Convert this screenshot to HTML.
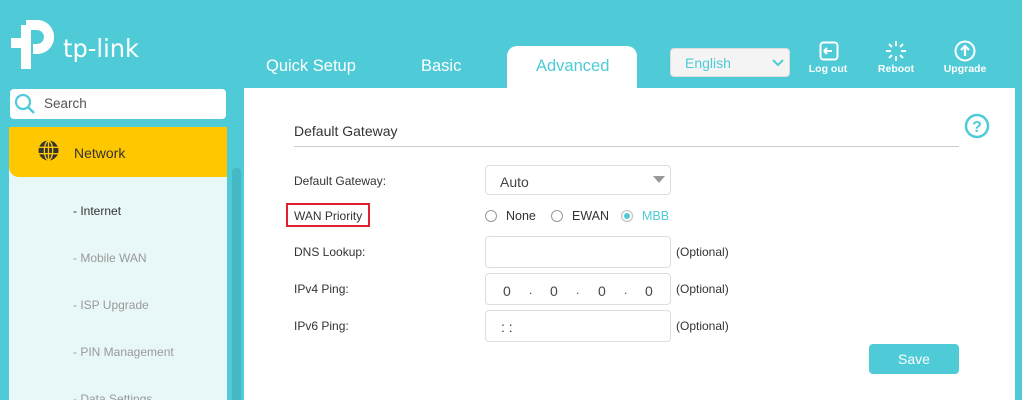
<!DOCTYPE html>
<html><head><style>
*{margin:0;padding:0;box-sizing:border-box}
html,body{width:1022px;height:400px;overflow:hidden}
body{background:#4ecbd6;font-family:"Liberation Sans",Arial,sans-serif;position:relative}
.a{position:absolute}
.tab{position:absolute;top:57px;color:#fff;font-size:17px}
.lbl{position:absolute;left:294px;font-size:12px;color:#333}
.inp{position:absolute;left:485px;width:186px;height:32px;border:1px solid #ddd;border-radius:4px;background:#fff;font-size:14px;color:#444}
.opt{position:absolute;left:676px;font-size:12px;color:#333}
.rad{position:absolute;width:12px;height:12px;border:1px solid #999;border-radius:50%}
.sub{position:absolute;left:73px;font-size:12px;color:#999}
.ic{position:absolute;top:63px;color:#fff;font-size:10.5px;font-weight:bold;text-align:center;width:60px}
</style></head><body>
<!-- logo -->
<svg class="a" style="left:8px;top:19px" width="135" height="52" viewBox="0 0 135 52">
<path d="M19 24 H3 M18 6 H29 a12 12 0 0 1 0 24 H25 M18 6 V50" stroke="#fff" stroke-width="10" fill="none"/>
<path d="M23 6 H29 a12 12 0 0 1 0 24" stroke="#fff" stroke-width="10" fill="none"/>
<text x="55" y="38" font-family="DejaVu Sans" font-size="25" fill="#fff" textLength="76" lengthAdjust="spacingAndGlyphs">tp-link</text>
</svg>
<!-- search -->
<div class="a" style="left:10px;top:89px;width:216px;height:30px;background:#fff;border-radius:4px"></div>
<svg class="a" style="left:14px;top:93px" width="22" height="22"><circle cx="9" cy="9" r="7" stroke="#4ecbd6" stroke-width="2.2" fill="none"/><path d="M14 14 L20 20" stroke="#4ecbd6" stroke-width="2.5"/></svg>
<div class="a" style="left:44px;top:96px;font-size:13.5px;color:#555">Search</div>
<!-- sidebar -->
<div class="a" style="left:9px;top:127px;width:218px;height:290px;background:#e8f8f8"></div>
<div class="a" style="left:9px;top:127px;width:218px;height:50px;background:#ffc700;border-radius:0 0 0 10px"></div>
<svg class="a" style="left:38px;top:140px" width="21" height="21" viewBox="0 0 20 20"><circle cx="10" cy="10" r="9.5" fill="#333"/><g stroke="#ffc700" stroke-width="1.3" fill="none"><ellipse cx="10" cy="10" rx="4" ry="9"/><path d="M1 7h18M1 13h18M10 1v18"/></g></svg>
<div class="a" style="left:74px;top:145px;font-size:14px;color:#333">Network</div>
<div class="sub" style="top:204px;color:#333">- Internet</div>
<div class="sub" style="top:251px">- Mobile WAN</div>
<div class="sub" style="top:298px">- ISP Upgrade</div>
<div class="sub" style="top:345px">- PIN Management</div>
<div class="sub" style="top:392px">- Data Settings</div>
<div class="a" style="left:232px;top:168px;width:9px;height:250px;background:#45b8c3;border-radius:4px"></div>
<!-- tabs -->
<div class="tab" style="left:266px;font-size:16.5px">Quick Setup</div>
<div class="tab" style="left:421px;font-size:16.5px">Basic</div>
<div class="a" style="left:507px;top:46px;width:130px;height:44px;background:#fff;border-radius:10px 10px 0 0"></div>
<div class="tab" style="left:536px;color:#4ecbd6;font-size:16.5px">Advanced</div>
<!-- lang -->
<div class="a" style="left:670px;top:48px;width:120px;height:29px;background:#f4f4f4;border:1px solid #ddd;border-radius:4px"></div>
<div class="a" style="left:685px;top:55px;font-size:14px;color:#4ecbd6">English</div>
<svg class="a" style="left:772px;top:59px" width="12" height="8"><path d="M1 1 L6 6 L11 1" stroke="#4ecbd6" stroke-width="2" fill="none"/></svg>
<!-- icons -->
<svg class="a" style="left:819px;top:41px" width="20" height="20"><rect x="1.5" y="1.5" width="17" height="17" rx="3" stroke="#fff" stroke-width="2" fill="none"/><path d="M5 10h8M5 10l3-3M5 10l3 3" stroke="#fff" stroke-width="2" fill="none"/></svg>
<div class="ic" style="left:798px">Log out</div>
<svg class="a" style="left:885px;top:40px" width="22" height="22" stroke="#fff" stroke-width="2"><path d="M11 1v5M11 16v5M1 11h5M16 11h5M4 4l3 3M15 15l3 3M18 4l-3 3M7 15l-3 3"/></svg>
<div class="ic" style="left:866px">Reboot</div>
<svg class="a" style="left:954px;top:40px" width="22" height="22"><circle cx="11" cy="11" r="9.5" stroke="#fff" stroke-width="2" fill="none"/><path d="M11 16V7M7 10l4-4 4 4" stroke="#fff" stroke-width="2.2" fill="none"/></svg>
<div class="ic" style="left:935px">Upgrade</div>
<!-- content -->
<div class="a" style="left:244px;top:88px;width:771px;height:330px;background:#fff"></div>
<div class="a" style="left:294px;top:123px;font-size:14px;color:#333">Default Gateway</div>
<div class="a" style="left:294px;top:146px;width:665px;height:1px;background:#ccc"></div>
<svg class="a" style="left:964px;top:113px" width="26" height="26"><circle cx="13" cy="13" r="11" stroke="#4ecbd6" stroke-width="2.5" fill="none"/><text x="13" y="19" text-anchor="middle" font-family="Liberation Sans" font-weight="bold" font-size="16" fill="#4ecbd6">?</text></svg>
<div class="lbl" style="top:174px">Default Gateway:</div>
<div class="inp" style="top:165px;height:30px;padding:8px 14px">Auto</div>
<svg class="a" style="left:653px;top:176px" width="12" height="8"><path d="M0 0h12L6 7z" fill="#999"/></svg>
<div class="a" style="left:286px;top:203px;width:84px;height:24px;border:2px solid #e0202a"></div>
<div class="lbl" style="top:209px">WAN Priority</div>
<div class="rad" style="left:485px;top:210px"></div><div class="a" style="left:506px;top:209px;font-size:12.5px;color:#333">None</div>
<div class="rad" style="left:551px;top:210px"></div><div class="a" style="left:572px;top:209px;font-size:12.5px;color:#333">EWAN</div>
<div class="rad" style="left:621px;top:210px;border-color:#bbb"><div style="margin:2px;width:6px;height:6px;border-radius:50%;background:#4ecbd6"></div></div><div class="a" style="left:642px;top:209px;font-size:12.5px;color:#4ecbd6">MBB</div>
<div class="lbl" style="top:245px">DNS Lookup:</div>
<div class="inp" style="top:236px"></div><div class="opt" style="top:245px">(Optional)</div>
<div class="lbl" style="top:282px">IPv4 Ping:</div>
<div class="inp" style="top:273px"></div><div class="opt" style="top:282px">(Optional)</div>
<div class="a" style="left:503px;top:283px;font-size:14px;color:#444">0</div>
<div class="a" style="left:529px;top:283px;font-size:12px;color:#444">.</div>
<div class="a" style="left:550px;top:283px;font-size:14px;color:#444">0</div>
<div class="a" style="left:576px;top:283px;font-size:12px;color:#444">.</div>
<div class="a" style="left:598px;top:283px;font-size:14px;color:#444">0</div>
<div class="a" style="left:624px;top:283px;font-size:12px;color:#444">.</div>
<div class="a" style="left:645px;top:283px;font-size:14px;color:#444">0</div>
<div class="lbl" style="top:319px">IPv6 Ping:</div>
<div class="inp" style="top:310px"></div><div class="opt" style="top:319px">(Optional)</div>
<div class="a" style="left:501px;top:319px;font-size:14px;color:#444">: :</div>
<div class="a" style="left:869px;top:344px;width:90px;height:30px;background:#4ecbd6;border-radius:4px;color:#fff;font-size:14px;text-align:center;line-height:30px">Save</div>
</body></html>
